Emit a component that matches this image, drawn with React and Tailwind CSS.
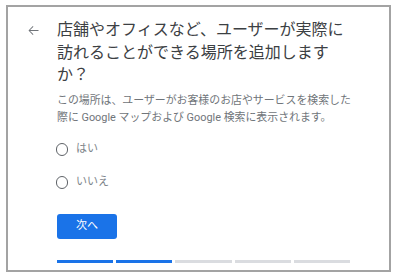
export default function App() {
  const segs = [true, true, false, false, false];
  return (
    <div className="w-[397px] h-[278px] bg-white pt-[5px] pl-[6px]" style={{ fontFamily: "Roboto, 'Noto Sans CJK JP', sans-serif" }}>
      <div className="w-[385px] h-[267px] border-2 border-[#a3a3a3] flex">
        <div className="w-[49px] pl-[18px] pt-[16px] shrink-0">
          <svg width="15" height="15" viewBox="0 0 24 24" fill="#6f7378">
            <path d="M20 11.3H6.5l5.4-5.4-1-1L4 12l6.9 7.1 1-1-5.4-5.4H20z" />
          </svg>
        </div>
        <div className="flex flex-col w-[300px]">
          <div className="pt-[12px] text-[16px] leading-[22.5px] text-[#3c4043]">
            店舗やオフィスなど、ユーザーが実際に<br />訪れることができる場所を追加します<br />か？
          </div>
          <div className="mt-[5px] text-[10.9px] leading-[17px] text-[#70757a]">
            この場所は、ユーザーがお客様のお店やサービスを検索した<br />際に Google マップおよび Google 検索に表示されます。
          </div>
          <div className="mt-[15px] flex flex-col gap-[15px]">
            {["はい", "いいえ"].map((t) => (
              <div key={t} className="flex items-center h-[18px]">
                <div className="w-[12.5px] h-[12.5px] rounded-full border-[1.7px] border-[#5f6368] ml-[-1.5px]" />
                <span className="ml-[8px] text-[11px] text-[#80868b]">{t}</span>
              </div>
            ))}
          </div>
          <button className="mt-[22px] w-[60px] h-[25px] rounded-[3px] bg-[#1a73e8] text-white text-[11px] flex items-center justify-center">
            次へ
          </button>
          <div className="mt-[21px] flex gap-[3px] w-[293px]">
            {segs.map((b, i) => (
              <div key={i} className={"flex-1 h-[3px] " + (b ? "bg-[#1a73e8]" : "bg-[#dadce0]")} />
            ))}
          </div>
        </div>
      </div>
    </div>
  );
}
